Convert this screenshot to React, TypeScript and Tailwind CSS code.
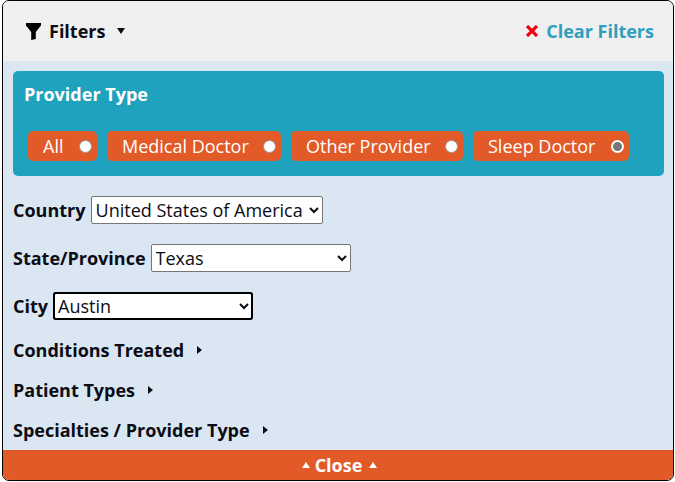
const PROVIDERS = [
  { label: 'All', width: 'w-[69px]', active: false },
  { label: 'Medical Doctor', width: 'w-[174px]', active: false },
  { label: 'Other Provider', width: 'w-[172px]', active: false },
  { label: 'Sleep Doctor', width: 'w-[156px]', active: true },
];

const Pill = ({ label, width, active }: { label: string; width: string; active: boolean }) => (
  <label className={`flex h-[30px] items-center justify-between rounded-[5px] bg-[#e15a27] pl-[15px] pr-[5px] text-[18px] text-white ${width}`}>
    <span>{label}</span>
    <span
      className={`h-[13px] w-[13px] rounded-full ${
        active ? 'border-[2px] border-white bg-[#767676]' : 'border border-[#9a9a9a] bg-white'
      }`}
    />
  </label>
);

const Collapsed = ({ label }: { label: string }) => (
  <div className="flex h-[40px] items-center text-[18px] font-bold text-[#0c0c14]">
    <span>{label}</span>
    <svg viewBox="0 0 5 8" className="ml-[13px] h-[8px] w-[5px]" fill="currentColor">
      <path d="M0 0 L5 4 L0 8 Z" />
    </svg>
  </div>
);

export default function App() {
  return (
    <div className="h-[482px] w-[675px] bg-white pl-[2px] pr-[1px] pb-[1px] font-['Open_Sans',sans-serif]">
      <div className="flex h-full flex-col overflow-hidden rounded-[7px] border border-black bg-[#dae6f2]">
        {/* Header */}
        <div className="flex h-[60px] shrink-0 items-center justify-between bg-[#f0f0f0] pl-[23px] pr-[19px] text-[18px] font-bold">
          <div className="flex items-center text-[#0c0c14]">
            <svg viewBox="0 0 15 17" className="h-[17px] w-[15px]" fill="#000">
              <path d="M0 0 H15 V2.5 L9.8 9 V16 L5.2 17 V9 L0 2.5 Z" />
            </svg>
            <span className="ml-[8px]">Filters</span>
            <svg viewBox="0 0 8 6" className="ml-[12px] h-[6px] w-[8px]" fill="currentColor">
              <path d="M0 0 H8 L4 6 Z" />
            </svg>
          </div>
          <div className="flex items-center text-[#2f9fbd]">
            <svg viewBox="0 0 12 12" className="h-[12px] w-[12px]" stroke="#f5000f" strokeWidth={3.2}>
              <path d="M1 1 L11 11 M11 1 L1 11" />
            </svg>
            <span className="ml-[8px]">Clear Filters</span>
          </div>
        </div>

        <div className="flex min-h-0 flex-1 flex-col pl-[10px] pr-[9px] pt-[10px]">
          {/* Provider type */}
          <div className="h-[105px] shrink-0 rounded-[5px] bg-[#1fa2bd] pl-[15px] pr-[10px]">
            <div className="-ml-[4px] pt-[9px] text-[18px] font-bold leading-[28px] text-white">Provider Type</div>
            <div className="mt-[23px] flex gap-[10px]">
              {PROVIDERS.map((p) => (
                <Pill key={p.label} {...p} />
              ))}
            </div>
          </div>

          {/* Location selects */}
          <div className="mt-[20px] flex flex-col gap-[20px] text-[18px] font-bold text-[#0c0c14]">
            <div className="flex h-[28px] items-center gap-[5px]">
              <span>Country</span>
              <select defaultValue="us" className="h-[28px] w-[232px] rounded-[2px] border border-[#767676] bg-white text-[18px] font-normal">
                <option value="us">United States of America</option>
              </select>
            </div>
            <div className="flex h-[28px] items-center gap-[5px]">
              <span>State/Province</span>
              <select defaultValue="tx" className="h-[28px] w-[200px] rounded-[2px] border border-[#767676] bg-white text-[18px] font-normal">
                <option value="tx">Texas</option>
              </select>
            </div>
            <div className="flex h-[28px] items-center gap-[5px]">
              <span>City</span>
              <select defaultValue="austin" className="h-[28px] w-[200px] rounded-[3px] border border-black bg-white text-[18px] font-normal outline-2 -outline-offset-2 outline-black">
                <option value="austin">Austin</option>
              </select>
            </div>
          </div>

          {/* Collapsed sections */}
          <div className="mt-[10px] flex flex-col">
            <Collapsed label="Conditions Treated" />
            <Collapsed label="Patient Types" />
            <Collapsed label="Specialties / Provider Type" />
          </div>
        </div>

        {/* Close bar */}
        <div className="flex h-[30px] shrink-0 items-center justify-center bg-[#e15a27] pl-[3px] text-[18px] font-bold text-white">
          <svg viewBox="0 0 8 6" className="h-[6px] w-[8px]" fill="currentColor">
            <path d="M0 6 H8 L4 0 Z" />
          </svg>
          <span className="ml-[5px] mr-[7px]">Close</span>
          <svg viewBox="0 0 8 6" className="h-[6px] w-[8px]" fill="currentColor">
            <path d="M0 6 H8 L4 0 Z" />
          </svg>
        </div>
      </div>
    </div>
  );
}
